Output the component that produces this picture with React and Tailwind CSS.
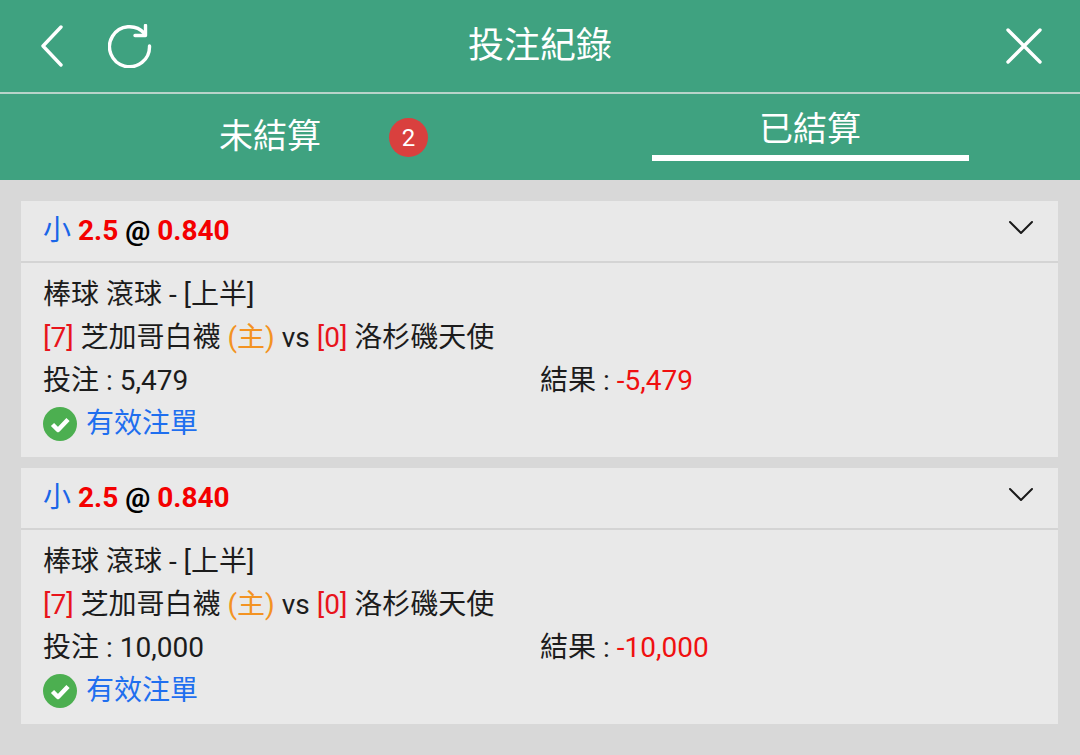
import React from 'react';

const FONT = "font-['Roboto','Noto_Sans_CJK_TC',sans-serif]";

const bets = [
  { stake: '5,479', result: '-5,479' },
  { stake: '10,000', result: '-10,000' },
];

const BetCard = ({ stake, result }) => (
  <div className="bg-[#e9e9e9]">
    <div className="flex h-[60px] items-center justify-between border-b-2 border-[#d4d4d4] box-content pl-[22px] pr-[24px]">
      <div className="text-[28px] font-bold leading-[60px] text-black">
        <span className="text-[#1a66e8] font-normal">小</span> <span className="text-[#f40000]">2.5</span> @ <span className="text-[#f40000]">0.840</span>
      </div>
      <svg className="mb-[6px]" width="26" height="18" viewBox="0 0 26 18" fill="none" stroke="#1a1a1a" strokeWidth="2" strokeLinecap="round" strokeLinejoin="round">
        <path d="M2 3 L13 14 L24 3" />
      </svg>
    </div>
    <div className="pl-[22px] pt-[10px] pb-[12px] text-[28px] leading-[43px] text-[#1c1c1c]">
      <div>棒球 滾球 - [上半]</div>
      <div>
        <span className="text-[#e8141c]">[7]</span> 芝加哥白襪 <span className="text-[#f39322]">(主)</span> vs <span className="text-[#e8141c]">[0]</span> 洛杉磯天使
      </div>
      <div className="flex">
        <div className="w-[497px]">投注 : {stake}</div>
        <div>結果 : <span className="text-[#f01010]">{result}</span></div>
      </div>
      <div className="flex items-center gap-[9px]">
        <svg width="34" height="34" viewBox="0 0 34 34">
          <circle cx="17" cy="17" r="17" fill="#4caf50" />
          <path d="M9.5 17.5 L15 23 L25 12.5" fill="none" stroke="#fff" strokeWidth="4.5" strokeLinejoin="round" />
        </svg>
        <span className="text-[#1f6fef]">有效注單</span>
      </div>
    </div>
  </div>
);

export default function App() {
  return (
    <div className={`${FONT} h-[755px] w-[1080px] overflow-hidden bg-[#d8d8d8]`}>
      <div className="bg-[#3fa280] text-white">
        <div className="relative flex h-[92px] items-center justify-between pl-[40px] pr-[38px]">
          <div className="flex items-center gap-[44px]">
            <svg width="24" height="42" viewBox="0 0 24 42" fill="none" stroke="#fff" strokeWidth="3.4" strokeLinecap="round" strokeLinejoin="round">
              <path d="M21 2 L3 21 L21 40" />
            </svg>
            <svg width="44" height="44" viewBox="0 0 44 44" fill="none" stroke="#fff" strokeWidth="3.4" strokeLinecap="round" strokeLinejoin="round">
              <path d="M36.5 9.5 A20 20 0 1 0 41.5 22" />
              <path d="M37.5 1.5 V11.5 H27" />
            </svg>
          </div>
          <div className="absolute inset-x-0 text-center text-[36px] leading-[44px]">投注紀錄</div>
          <svg width="36" height="36" viewBox="0 0 36 36" fill="none" stroke="#fff" strokeWidth="3.4" strokeLinecap="round">
            <path d="M2 2 L34 34 M34 2 L2 34" />
          </svg>
        </div>
        <div className="h-[2px] bg-[#b8d4ca]" />
        <div className="flex h-[86px]">
          <div className="relative flex w-[540px] justify-center pt-[18px] text-[34px] leading-[48px]">
            未結算
            <span className="absolute left-[389px] top-[24px] flex h-[39px] w-[39px] items-center justify-center rounded-full bg-[#d9403e] text-[24px] leading-none">2</span>
          </div>
          <div className="flex w-[540px] flex-col items-center">
            <div className="h-[61px] pt-[11px] text-[34px] leading-[48px] pl-[0px]">已結算</div>
            <div className="h-[6px] w-[317px] bg-white" />
          </div>
        </div>
      </div>
      <div className="flex flex-col gap-[11px] pl-[21px] pr-[22px] pt-[21px]">
        {bets.map((bet, i) => (
          <BetCard key={i} stake={bet.stake} result={bet.result} />
        ))}
      </div>
    </div>
  );
}
